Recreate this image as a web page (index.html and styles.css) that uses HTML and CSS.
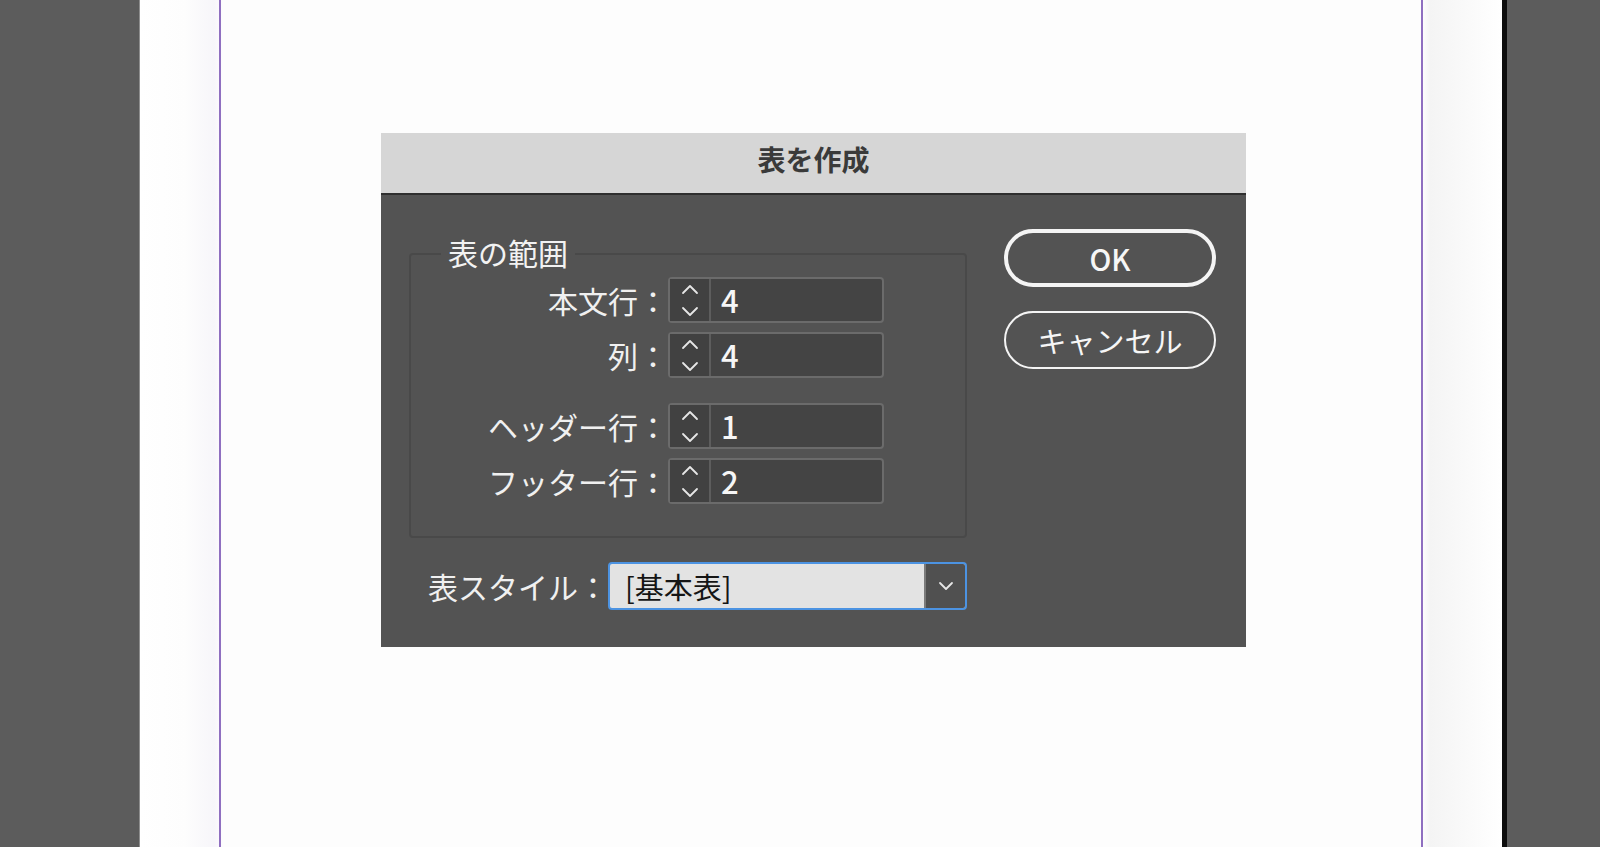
FILE: index.html
```html
<!DOCTYPE html>
<html lang="ja">
<head>
  <meta charset="UTF-8" />
  <meta name="viewport" content="width=device-width, initial-scale=1.0"/>
  <title>表を作成</title>
  <link rel="stylesheet" href="styles.css">
</head>
<body>

  <div class="desk">
    <div class="gutter"></div>

    <div class="sheet">
      <div class="margins">

        <div class="dialog">
          <div class="titlebar">表を作成</div>

          <div class="dlg-body">
            <div class="main-col">
              <fieldset class="range">
                <legend>表の範囲</legend>

                <div class="field-row first">
                  <label for="bodyRows">本文行：</label>
                  <div class="spin">
                    <span class="spin-btns">
                      <svg width="18" height="42" viewBox="0 0 18 42"><path d="M2 14 L9 7 L16 14 M2 29 L9 36 L16 29" /></svg>
                    </span>
                    <span class="spin-val" id="bodyRows">4</span>
                  </div>
                </div>

                <div class="field-row">
                  <label for="cols">列：</label>
                  <div class="spin">
                    <span class="spin-btns">
                      <svg width="18" height="42" viewBox="0 0 18 42"><path d="M2 14 L9 7 L16 14 M2 29 L9 36 L16 29" /></svg>
                    </span>
                    <span class="spin-val" id="cols">4</span>
                  </div>
                </div>

                <div class="field-row split">
                  <label for="headRows">ヘッダー行：</label>
                  <div class="spin">
                    <span class="spin-btns">
                      <svg width="18" height="42" viewBox="0 0 18 42"><path d="M2 14 L9 7 L16 14 M2 29 L9 36 L16 29" /></svg>
                    </span>
                    <span class="spin-val" id="headRows">1</span>
                  </div>
                </div>

                <div class="field-row">
                  <label for="footRows">フッター行：</label>
                  <div class="spin">
                    <span class="spin-btns">
                      <svg width="18" height="42" viewBox="0 0 18 42"><path d="M2 14 L9 7 L16 14 M2 29 L9 36 L16 29" /></svg>
                    </span>
                    <span class="spin-val" id="footRows">2</span>
                  </div>
                </div>
              </fieldset>

              <div class="style-row">
                <label for="tableStyle">表スタイル：</label>
                <div class="select">
                  <span class="select-val" id="tableStyle">[基本表]</span>
                  <span class="select-arrow">
                    <svg width="16" height="10" viewBox="0 0 16 10"><path d="M2 2 L8 8 L14 2" /></svg>
                  </span>
                </div>
              </div>
            </div>

            <div class="btn-col">
              <button class="btn default">OK</button>
              <button class="btn">キャンセル</button>
            </div>
          </div>
        </div>

      </div>
    </div>

    <div class="sheet-edge"></div>
    <div class="gutter right"></div>
  </div>

</body>
</html>
```

FILE: styles.css
```css
* {
  box-sizing: border-box;
}
html, body {
  margin: 0;
  height: 100%;
}
body {
  background-color: #5c5c5c;
  overflow: hidden;
  font-family: "Noto Sans CJK JP", "Noto Sans", sans-serif;
}
.desk {
  display: flex;
  height: 847px;
}
.gutter {
  width: 140px;
  background-color: #5c5c5c;
  border-right: 1px solid #8e8e8e;
}
.gutter.right {
  flex: 1;
  border-right: none;
}
.sheet {
  width: 1362px;
  padding-left: 79px;
  background: linear-gradient(to right,
    #ffffff 0, #fdfdfd 45px, #f7f6fa 74px, #fbf9fd 79px,
    #fdfdfd 83px, #fdfdfd 1283px, #f4f4f4 1290px,
    #fafafa 1330px, #ffffff 1362px);
}
.sheet-edge {
  width: 5px;
  background-color: #0d0d0d;
}
.margins {
  width: 1204px;
  height: 100%;
  border-left: 2px solid #8f6fc0;
  border-right: 2px solid #8f6fc0;
  padding-top: 133px;
  padding-left: 160px;
}

/* dialog */
.dialog {
  width: 865px;
  height: 514px;
  background-color: #535353;
}
.titlebar {
  height: 62px;
  background-color: #d6d6d6;
  border-bottom: 2px solid #2f2f2f;
  text-align: center;
  font-size: 28px;
  font-weight: bold;
  line-height: 52px;
  color: #3a3a3a;
}
.dlg-body {
  display: flex;
  justify-content: space-between;
  padding: 34px 30px 0 28px;
}
.main-col {
  width: 558px;
  padding-top: 6px;
}
.range {
  margin: 0;
  padding: 0 0 32px 0;
  border: 2px solid #494949;
  border-radius: 4px;
  min-width: 0;
}
.range legend {
  margin-left: 30px;
  padding: 0 7px 4px;
  font-size: 30px;
  line-height: 34px;
  color: #f2f2f2;
}
.field-row {
  display: flex;
  align-items: center;
  height: 46px;
  margin-top: 9px;
}
.field-row.first {
  margin-top: 4px;
}
.field-row.split {
  margin-top: 25px;
}
.field-row label,
.style-row label {
  text-align: right;
  font-size: 30px;
  line-height: 40px;
  color: #f0f0f0;
}
.field-row label {
  width: 257px;
}

/* number spinner */
.spin {
  display: flex;
  width: 216px;
  height: 46px;
  border: 2px solid #6b6b6b;
  border-radius: 4px;
  background-color: #444444;
}
.spin-btns {
  display: flex;
  align-items: center;
  justify-content: center;
  width: 41px;
  border-right: 2px solid #5d5d5d;
  background-color: #414141;
}
.spin-btns svg path,
.select-arrow svg path {
  fill: none;
  stroke: #e6e6e6;
  stroke-width: 1.8;
  stroke-linecap: round;
  stroke-linejoin: round;
}
.spin-val {
  padding-left: 10px;
  font-size: 31px;
  font-weight: 500;
  line-height: 42px;
  color: #f6f6f6;
}

/* style dropdown */
.style-row {
  display: flex;
  align-items: center;
  margin-top: 24px;
}
.style-row label {
  width: 199px;
}
.select {
  display: flex;
  width: 359px;
  height: 48px;
  border: 2px solid #4c93e2;
  border-radius: 4px;
  background-color: #e3e3e3;
  overflow: hidden;
}
.select-val {
  flex: 1;
  padding-left: 15px;
  font-size: 29px;
  line-height: 44px;
  color: #151515;
}
.select-arrow {
  display: flex;
  align-items: center;
  justify-content: center;
  width: 41px;
  border-left: 2px solid #7b7b7b;
  background-color: #505050;
}

/* buttons */
.btn-col {
  display: flex;
  flex-direction: column;
  gap: 24px;
}
.btn {
  width: 212px;
  height: 58px;
  padding: 0;
  border: 2px solid #f4f4f4;
  border-radius: 29px;
  background: transparent;
  color: #f6f6f6;
  font-family: "Noto Sans CJK JP", "Noto Sans", sans-serif;
  font-size: 29px;
  line-height: 50px;
  cursor: pointer;
}
.btn.default {
  border-width: 4px;
  font-weight: 500;
}
```
